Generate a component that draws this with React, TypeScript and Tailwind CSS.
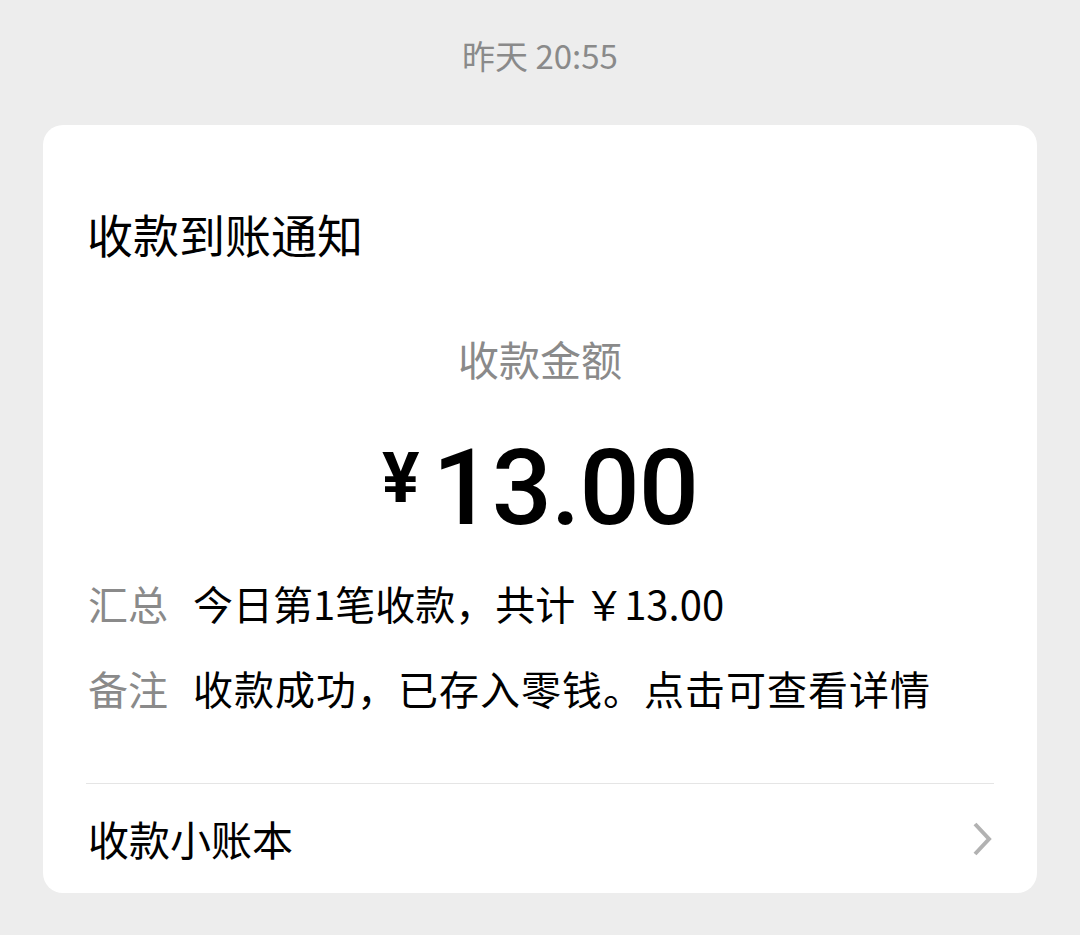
export default function App() {
  const cjk = { fontFamily: '"Noto Sans CJK SC", "Noto Sans", sans-serif' };
  const num = { fontFamily: 'Roboto, "Noto Sans CJK SC", sans-serif' };
  return (
    <div className="w-[1080px] h-[935px] bg-[#ededed] flex flex-col" style={cjk}>
      {/* 时间 */}
      <div className="pt-[35px] h-[77px] text-center text-[33px] leading-[40px] text-[#8a8a8a]">
        昨天 20:55
      </div>

      {/* 卡片 */}
      <div className="mt-[48px] mx-[43px] bg-white rounded-[20px] flex flex-col">
        <div className="pt-[78px] px-[44px] text-[46px] leading-[60px] text-black">收款到账通知</div>

        <div className="mt-[70px] text-center text-[41px] leading-[50px] text-[#8a8a8a]">收款金额</div>

        <div className="mt-[45px] h-[120px] flex items-center justify-center text-black">
          <span className="text-[70px] font-bold leading-none mr-[13px] mt-[-20px]" style={num}>¥</span>
          <span className="text-[106px] font-medium leading-none tracking-[-1px]" style={num}>13.00</span>
        </div>

        <div className="mt-[27px] px-[45px] flex items-center h-[56px] text-[40px]">
          <span className="text-[#8a8a8a] w-[105px]">汇总</span>
          <span className="text-black">今日第1笔收款，共计 ￥13.00</span>
        </div>
        <div className="mt-[29px] px-[45px] flex items-center h-[56px] text-[40px]">
          <span className="text-[#8a8a8a] w-[105px]">备注</span>
          <span className="text-black tracking-[1px]">收款成功，已存入零钱。点击可查看详情</span>
        </div>

        <div className="mt-[67px] mx-[43px] h-px bg-[#e5e5e5]" />

        <div className="h-[109px] px-[45px] flex items-center justify-between">
          <span className="text-[41px] text-black">收款小账本</span>
          <svg width="20" height="36" viewBox="0 0 20 36">
            <path d="M3 3 L17 18 L3 33" fill="none" stroke="#b2b2b2" strokeWidth="4" />
          </svg>
        </div>
      </div>
    </div>
  );
}
